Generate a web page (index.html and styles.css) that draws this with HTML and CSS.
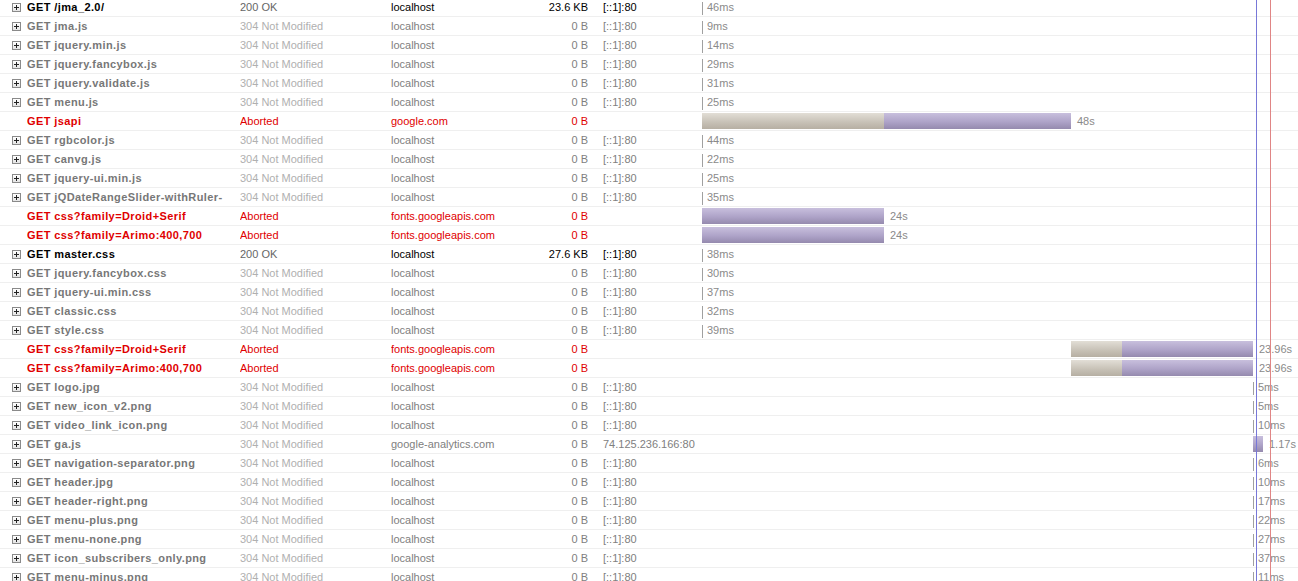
FILE: index.html
```html
<!DOCTYPE html>
<html>
<head>
<meta charset="utf-8">
<link rel="stylesheet" href="styles.css">
</head>
<body>
<div class="net">
  <div class="row ok">
    <div class="c-tw"><span class="tw"></span></div><div class="c-name">GET /jma_2.0/</div><div class="c-status">200 OK</div><div class="c-dom">localhost</div><div class="c-size">23.6 KB</div><div class="c-ip">[::1]:80</div>
    <div class="c-time"><span class="tick" style="margin-left:2px"></span><span class="lbl">46ms</span></div>
  </div>
  <div class="row nm">
    <div class="c-tw"><span class="tw"></span></div><div class="c-name">GET jma.js</div><div class="c-status">304 Not Modified</div><div class="c-dom">localhost</div><div class="c-size">0 B</div><div class="c-ip">[::1]:80</div>
    <div class="c-time"><span class="tick" style="margin-left:2px"></span><span class="lbl">9ms</span></div>
  </div>
  <div class="row nm">
    <div class="c-tw"><span class="tw"></span></div><div class="c-name">GET jquery.min.js</div><div class="c-status">304 Not Modified</div><div class="c-dom">localhost</div><div class="c-size">0 B</div><div class="c-ip">[::1]:80</div>
    <div class="c-time"><span class="tick" style="margin-left:2px"></span><span class="lbl">14ms</span></div>
  </div>
  <div class="row nm">
    <div class="c-tw"><span class="tw"></span></div><div class="c-name">GET jquery.fancybox.js</div><div class="c-status">304 Not Modified</div><div class="c-dom">localhost</div><div class="c-size">0 B</div><div class="c-ip">[::1]:80</div>
    <div class="c-time"><span class="tick" style="margin-left:2px"></span><span class="lbl">29ms</span></div>
  </div>
  <div class="row nm">
    <div class="c-tw"><span class="tw"></span></div><div class="c-name">GET jquery.validate.js</div><div class="c-status">304 Not Modified</div><div class="c-dom">localhost</div><div class="c-size">0 B</div><div class="c-ip">[::1]:80</div>
    <div class="c-time"><span class="tick" style="margin-left:2px"></span><span class="lbl">31ms</span></div>
  </div>
  <div class="row nm">
    <div class="c-tw"><span class="tw"></span></div><div class="c-name">GET menu.js</div><div class="c-status">304 Not Modified</div><div class="c-dom">localhost</div><div class="c-size">0 B</div><div class="c-ip">[::1]:80</div>
    <div class="c-time"><span class="tick" style="margin-left:2px"></span><span class="lbl">25ms</span></div>
  </div>
  <div class="row err">
    <div class="c-tw"></div><div class="c-name">GET jsapi</div><div class="c-status">Aborted</div><div class="c-dom">google.com</div><div class="c-size">0 B</div><div class="c-ip"></div>
    <div class="c-time"><span class="bar wait" style="margin-left:2px;width:182px"></span><span class="bar recv" style="width:187px"></span><span class="lbl blbl">48s</span></div>
  </div>
  <div class="row nm">
    <div class="c-tw"><span class="tw"></span></div><div class="c-name">GET rgbcolor.js</div><div class="c-status">304 Not Modified</div><div class="c-dom">localhost</div><div class="c-size">0 B</div><div class="c-ip">[::1]:80</div>
    <div class="c-time"><span class="tick" style="margin-left:2px"></span><span class="lbl">44ms</span></div>
  </div>
  <div class="row nm">
    <div class="c-tw"><span class="tw"></span></div><div class="c-name">GET canvg.js</div><div class="c-status">304 Not Modified</div><div class="c-dom">localhost</div><div class="c-size">0 B</div><div class="c-ip">[::1]:80</div>
    <div class="c-time"><span class="tick" style="margin-left:2px"></span><span class="lbl">22ms</span></div>
  </div>
  <div class="row nm">
    <div class="c-tw"><span class="tw"></span></div><div class="c-name">GET jquery-ui.min.js</div><div class="c-status">304 Not Modified</div><div class="c-dom">localhost</div><div class="c-size">0 B</div><div class="c-ip">[::1]:80</div>
    <div class="c-time"><span class="tick" style="margin-left:2px"></span><span class="lbl">25ms</span></div>
  </div>
  <div class="row nm">
    <div class="c-tw"><span class="tw"></span></div><div class="c-name">GET jQDateRangeSlider-withRuler-</div><div class="c-status">304 Not Modified</div><div class="c-dom">localhost</div><div class="c-size">0 B</div><div class="c-ip">[::1]:80</div>
    <div class="c-time"><span class="tick" style="margin-left:2px"></span><span class="lbl">35ms</span></div>
  </div>
  <div class="row err">
    <div class="c-tw"></div><div class="c-name">GET css?family=Droid+Serif</div><div class="c-status">Aborted</div><div class="c-dom">fonts.googleapis.com</div><div class="c-size">0 B</div><div class="c-ip"></div>
    <div class="c-time"><span class="bar recv" style="margin-left:2px;width:182px"></span><span class="lbl blbl">24s</span></div>
  </div>
  <div class="row err">
    <div class="c-tw"></div><div class="c-name">GET css?family=Arimo:400,700</div><div class="c-status">Aborted</div><div class="c-dom">fonts.googleapis.com</div><div class="c-size">0 B</div><div class="c-ip"></div>
    <div class="c-time"><span class="bar recv" style="margin-left:2px;width:182px"></span><span class="lbl blbl">24s</span></div>
  </div>
  <div class="row ok">
    <div class="c-tw"><span class="tw"></span></div><div class="c-name">GET master.css</div><div class="c-status">200 OK</div><div class="c-dom">localhost</div><div class="c-size">27.6 KB</div><div class="c-ip">[::1]:80</div>
    <div class="c-time"><span class="tick" style="margin-left:2px"></span><span class="lbl">38ms</span></div>
  </div>
  <div class="row nm">
    <div class="c-tw"><span class="tw"></span></div><div class="c-name">GET jquery.fancybox.css</div><div class="c-status">304 Not Modified</div><div class="c-dom">localhost</div><div class="c-size">0 B</div><div class="c-ip">[::1]:80</div>
    <div class="c-time"><span class="tick" style="margin-left:2px"></span><span class="lbl">30ms</span></div>
  </div>
  <div class="row nm">
    <div class="c-tw"><span class="tw"></span></div><div class="c-name">GET jquery-ui.min.css</div><div class="c-status">304 Not Modified</div><div class="c-dom">localhost</div><div class="c-size">0 B</div><div class="c-ip">[::1]:80</div>
    <div class="c-time"><span class="tick" style="margin-left:2px"></span><span class="lbl">37ms</span></div>
  </div>
  <div class="row nm">
    <div class="c-tw"><span class="tw"></span></div><div class="c-name">GET classic.css</div><div class="c-status">304 Not Modified</div><div class="c-dom">localhost</div><div class="c-size">0 B</div><div class="c-ip">[::1]:80</div>
    <div class="c-time"><span class="tick" style="margin-left:2px"></span><span class="lbl">32ms</span></div>
  </div>
  <div class="row nm">
    <div class="c-tw"><span class="tw"></span></div><div class="c-name">GET style.css</div><div class="c-status">304 Not Modified</div><div class="c-dom">localhost</div><div class="c-size">0 B</div><div class="c-ip">[::1]:80</div>
    <div class="c-time"><span class="tick" style="margin-left:2px"></span><span class="lbl">39ms</span></div>
  </div>
  <div class="row err">
    <div class="c-tw"></div><div class="c-name">GET css?family=Droid+Serif</div><div class="c-status">Aborted</div><div class="c-dom">fonts.googleapis.com</div><div class="c-size">0 B</div><div class="c-ip"></div>
    <div class="c-time"><span class="bar wait" style="margin-left:371px;width:51px"></span><span class="bar recv" style="width:131px"></span><span class="lbl blbl">23.96s</span></div>
  </div>
  <div class="row err">
    <div class="c-tw"></div><div class="c-name">GET css?family=Arimo:400,700</div><div class="c-status">Aborted</div><div class="c-dom">fonts.googleapis.com</div><div class="c-size">0 B</div><div class="c-ip"></div>
    <div class="c-time"><span class="bar wait" style="margin-left:371px;width:51px"></span><span class="bar recv" style="width:131px"></span><span class="lbl blbl">23.96s</span></div>
  </div>
  <div class="row nm">
    <div class="c-tw"><span class="tw"></span></div><div class="c-name">GET logo.jpg</div><div class="c-status">304 Not Modified</div><div class="c-dom">localhost</div><div class="c-size">0 B</div><div class="c-ip">[::1]:80</div>
    <div class="c-time"><span class="tick" style="margin-left:553px"></span><span class="lbl">5ms</span></div>
  </div>
  <div class="row nm">
    <div class="c-tw"><span class="tw"></span></div><div class="c-name">GET new_icon_v2.png</div><div class="c-status">304 Not Modified</div><div class="c-dom">localhost</div><div class="c-size">0 B</div><div class="c-ip">[::1]:80</div>
    <div class="c-time"><span class="tick" style="margin-left:553px"></span><span class="lbl">5ms</span></div>
  </div>
  <div class="row nm">
    <div class="c-tw"><span class="tw"></span></div><div class="c-name">GET video_link_icon.png</div><div class="c-status">304 Not Modified</div><div class="c-dom">localhost</div><div class="c-size">0 B</div><div class="c-ip">[::1]:80</div>
    <div class="c-time"><span class="tick" style="margin-left:553px"></span><span class="lbl">10ms</span></div>
  </div>
  <div class="row nm">
    <div class="c-tw"><span class="tw"></span></div><div class="c-name">GET ga.js</div><div class="c-status">304 Not Modified</div><div class="c-dom">google-analytics.com</div><div class="c-size">0 B</div><div class="c-ip">74.125.236.166:80</div>
    <div class="c-time"><span class="bar recv" style="margin-left:553px;width:10px"></span><span class="lbl blbl">1.17s</span></div>
  </div>
  <div class="row nm">
    <div class="c-tw"><span class="tw"></span></div><div class="c-name">GET navigation-separator.png</div><div class="c-status">304 Not Modified</div><div class="c-dom">localhost</div><div class="c-size">0 B</div><div class="c-ip">[::1]:80</div>
    <div class="c-time"><span class="tick" style="margin-left:553px"></span><span class="lbl">6ms</span></div>
  </div>
  <div class="row nm">
    <div class="c-tw"><span class="tw"></span></div><div class="c-name">GET header.jpg</div><div class="c-status">304 Not Modified</div><div class="c-dom">localhost</div><div class="c-size">0 B</div><div class="c-ip">[::1]:80</div>
    <div class="c-time"><span class="tick" style="margin-left:553px"></span><span class="lbl">10ms</span></div>
  </div>
  <div class="row nm">
    <div class="c-tw"><span class="tw"></span></div><div class="c-name">GET header-right.png</div><div class="c-status">304 Not Modified</div><div class="c-dom">localhost</div><div class="c-size">0 B</div><div class="c-ip">[::1]:80</div>
    <div class="c-time"><span class="tick" style="margin-left:553px"></span><span class="lbl">17ms</span></div>
  </div>
  <div class="row nm">
    <div class="c-tw"><span class="tw"></span></div><div class="c-name">GET menu-plus.png</div><div class="c-status">304 Not Modified</div><div class="c-dom">localhost</div><div class="c-size">0 B</div><div class="c-ip">[::1]:80</div>
    <div class="c-time"><span class="tick" style="margin-left:553px"></span><span class="lbl">22ms</span></div>
  </div>
  <div class="row nm">
    <div class="c-tw"><span class="tw"></span></div><div class="c-name">GET menu-none.png</div><div class="c-status">304 Not Modified</div><div class="c-dom">localhost</div><div class="c-size">0 B</div><div class="c-ip">[::1]:80</div>
    <div class="c-time"><span class="tick" style="margin-left:553px"></span><span class="lbl">27ms</span></div>
  </div>
  <div class="row nm">
    <div class="c-tw"><span class="tw"></span></div><div class="c-name">GET icon_subscribers_only.png</div><div class="c-status">304 Not Modified</div><div class="c-dom">localhost</div><div class="c-size">0 B</div><div class="c-ip">[::1]:80</div>
    <div class="c-time"><span class="tick" style="margin-left:553px"></span><span class="lbl">37ms</span></div>
  </div>
  <div class="row nm">
    <div class="c-tw"><span class="tw"></span></div><div class="c-name">GET menu-minus.png</div><div class="c-status">304 Not Modified</div><div class="c-dom">localhost</div><div class="c-size">0 B</div><div class="c-ip">[::1]:80</div>
    <div class="c-time"><span class="tick" style="margin-left:553px"></span><span class="lbl">11ms</span></div>
  </div>
  <div class="vline dom-line"></div>
  <div class="vline load-line"></div>
</div>
</body>
</html>
```
FILE: styles.css
```css
html, body {
  margin: 0;
  padding: 0;
  background: #fff;
  overflow: hidden;
}
body {
  font-family: "Liberation Sans", Arial, sans-serif;
  font-size: 11px;
}
.net {
  position: relative;
  margin-top: -2px;
  width: 1298px;
}
.row {
  display: flex;
  height: 18px;
  line-height: 18px;
  border-bottom: 1px solid #efefef;
  white-space: nowrap;
}
.row > div {
  overflow: hidden;
}
.c-tw {
  width: 27px;
  flex: none;
  display: flex;
  align-items: center;
}
.tw {
  display: block;
  box-sizing: border-box;
  width: 9px;
  height: 9px;
  margin-left: 12px;
  margin-top: 1px;
  border: 1px solid #8a8a8a;
  background:
    linear-gradient(#222, #222) center / 5px 1px no-repeat,
    linear-gradient(#222, #222) center / 1px 5px no-repeat,
    linear-gradient(#fff, #e4e4e4);
}
.c-name {
  width: 198px;
  margin-right: 15px;
  flex: none;
  font-weight: bold;
  letter-spacing: 0.4px;
}
.c-status { width: 151px; flex: none; }
.c-dom { width: 137px; flex: none; }
.c-size { width: 60px; flex: none; text-align: right; }
.c-ip { width: 97px; padding-left: 15px; flex: none; }
.c-time {
  flex: 1;
  display: flex;
  align-items: center;
  color: #8a8a8a;
}
.tick {
  display: block;
  width: 1px;
  height: 13px;
  margin-top: 2px;
  background: #a0a0a0;
  flex: none;
}
.lbl { margin-left: 4px; }
.blbl { margin-left: 6px; }
.bar {
  display: block;
  height: 16px;
  flex: none;
}
.bar.wait { background: linear-gradient(#e2ded6, #c6c0b5 60%, #b6afa3); }
.bar.recv { background: linear-gradient(#c8bfdd, #aea3c8 55%, #958aae); }

/* row kinds */
.nm .c-name { color: #777; }
.nm .c-status { color: #b0b0b0; }
.nm .c-dom { color: #808080; }
.nm .c-size { color: #808080; }
.nm .c-ip { color: #808080; }

.ok .c-name { color: #000; }
.ok .c-status { color: #666; }
.ok .c-dom, .ok .c-size, .ok .c-ip { color: #000; }

.err .c-name, .err .c-status, .err .c-dom, .err .c-size { color: #e00000; }

.vline {
  position: absolute;
  top: 0;
  bottom: 0;
  width: 1px;
}
.dom-line { left: 1256px; background: #7878d8; }
.load-line { left: 1270px; background: #e08585; }
```
